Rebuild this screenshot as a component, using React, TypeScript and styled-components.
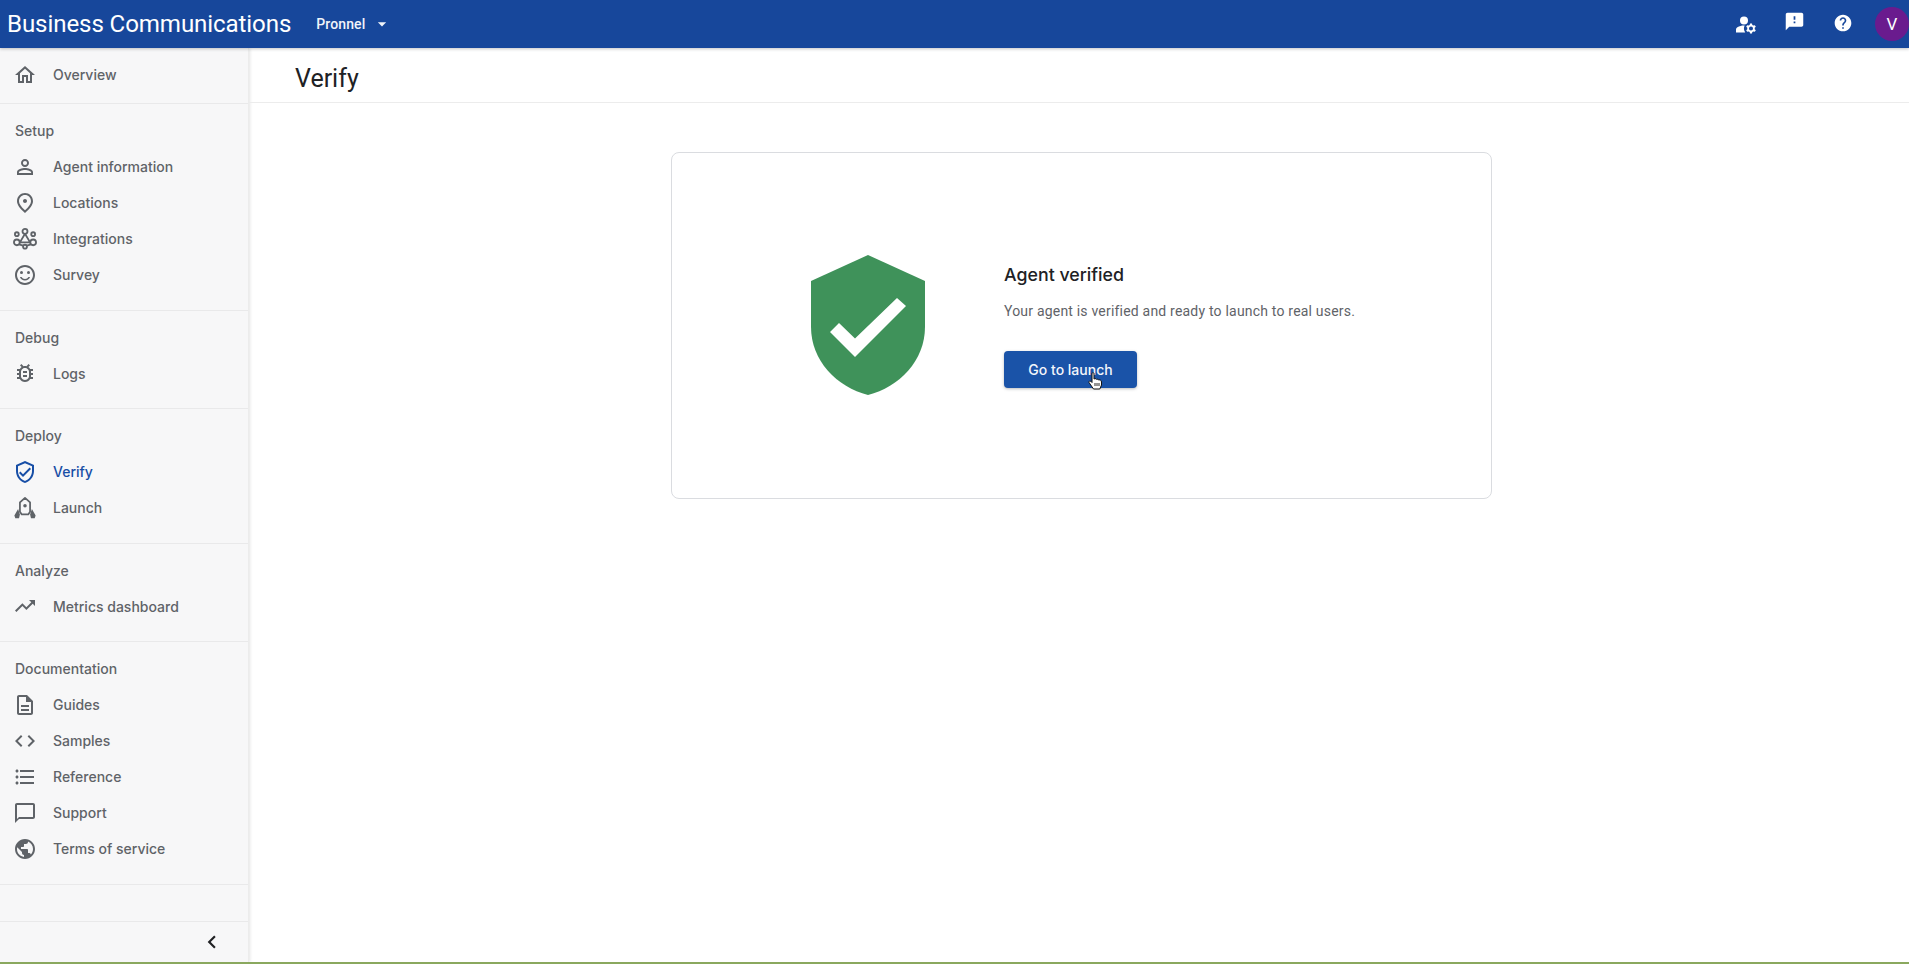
import React from "react";
import styled, { createGlobalStyle } from "styled-components";
import {
  MdOutlineHome,
  MdPersonOutline,
  MdOutlinePlace,
  MdOutlineSentimentSatisfied,
  MdOutlineBugReport,
  MdOutlineVerifiedUser,
  MdTrendingUp,
  MdOutlineDescription,
  MdCode,
  MdFormatListBulleted,
  MdChatBubbleOutline,
  MdPublic,
  MdChevronLeft,
  MdArrowDropDown,
  MdFeedback,
  MdHelp,
  MdManageAccounts,
} from "react-icons/md";

const Global = createGlobalStyle`
  html, body { margin: 0; padding: 0; height: 100%; background: #fff; }
  body { font-family: Roboto, "Liberation Sans", sans-serif; overflow: hidden; }
  #root { height: 100%; }
`;

const Page = styled.div`
  display: flex;
  flex-direction: column;
  height: 964px;
  border-bottom: 2px solid #8aa85e;
  box-sizing: border-box;
  overflow: hidden;
`;

const TopBar = styled.header`
  display: flex;
  align-items: center;
  flex: none;
  height: 48px;
  padding-left: 7px;
  background: #17479b;
  color: #fff;
  box-shadow: 0 1px 3px rgba(60, 64, 67, 0.3);
  position: relative;
  z-index: 2;
`;

const Product = styled.div`
  font-size: 24.1px;
  font-weight: 400;
  letter-spacing: -0.1px;
  margin-right: 25px;
`;

const Project = styled.div`
  display: flex;
  align-items: center;
  font-size: 14px;
  font-weight: 500;
  letter-spacing: 0.1px;
  color: #f1f4fa;
`;

const Caret = styled.span`
  display: flex;
  margin-left: 7px;
  font-size: 20px;
`;

const TopActions = styled.div`
  display: flex;
  align-items: center;
  gap: 24.6px;
  margin-left: auto;
  margin-right: 0;
`;

const ActionIcon = styled.span<{ $size: number; $up?: number }>`
  display: flex;
  align-items: center;
  justify-content: center;
  width: 24px;
  color: #fff;
  font-size: ${(p) => p.$size}px;
  margin-top: ${(p) => (p.$up ? `-${p.$up}px` : "0")};
`;

const Avatar = styled.div`
  display: flex;
  align-items: center;
  justify-content: center;
  width: 34px;
  height: 34px;
  margin-left: -5px;
  border-radius: 50%;
  background: #6a1b8e;
  font-size: 17px;
`;

const Body = styled.div`
  display: flex;
  flex: 1;
  min-height: 0;
`;

const Sidebar = styled.aside`
  display: flex;
  flex-direction: column;
  flex: none;
  width: 248px;
  background: #f7f7f8;
  border-right: 1px solid #ececec;
  box-shadow: 1px 0 3px rgba(60, 64, 67, 0.14);
`;

const OverviewBlock = styled.div`
  height: 54px;
  display: flex;
  align-items: center;
  border-bottom: 1px solid #e9e9ea;
  padding-bottom: 1px;
`;

const Section = styled.section`
  padding: 17px 0 16.5px;
  border-bottom: 1px solid #e9e9ea;
`;

const SectionLabel = styled.div`
  height: 20px;
  line-height: 20px;
  padding-left: 15px;
  margin-bottom: 8px;
  font-family: Inter, Roboto, sans-serif;
  font-size: 14px;
  font-weight: 500;
  color: #5f6368;
`;

const NavRow = styled.div<{ $active?: boolean }>`
  display: flex;
  align-items: center;
  gap: 16px;
  width: 100%;
  height: 36px;
  padding-left: 13px;
  padding-bottom: 1px;
  box-sizing: border-box;
  font-family: Inter, Roboto, sans-serif;
  font-size: 14px;
  font-weight: 500;
  color: ${(p) => (p.$active ? "#174ea6" : "#5f6368")};
`;

const NavIcon = styled.span`
  display: flex;
  align-items: center;
  justify-content: center;
  width: 24px;
  height: 24px;
  flex: none;
  font-size: 24px;
`;

const Spacer = styled.div`
  flex: none;
  height: 36px;
  border-bottom: 1px solid #e9e9ea;
`;

const SideFooter = styled.div`
  flex: 1;
  display: flex;
  align-items: center;
  justify-content: flex-end;
  padding-right: 23px;
  font-size: 26px;
  color: #202124;
`;

const Main = styled.main`
  flex: 1;
  min-width: 0;
  display: flex;
  flex-direction: column;
`;

const PageHeader = styled.div`
  display: flex;
  align-items: center;
  flex: none;
  height: 48px;
  padding: 6px 0 0 46px;
  border-bottom: 1px solid #ececec;
  font-size: 25px;
  color: #202124;
`;

const CardArea = styled.div`
  display: flex;
  justify-content: center;
  padding: 49px 0 0 5px;
`;

const Card = styled.div`
  display: flex;
  align-items: flex-start;
  width: 821px;
  height: 347px;
  box-sizing: border-box;
  padding: 102px 0 0 139px;
  border: 1px solid #dadce0;
  border-radius: 8px;
`;

const ShieldArt = styled.svg`
  flex: none;
  width: 114px;
  height: 140px;
`;

const CardText = styled.div`
  display: flex;
  flex-direction: column;
  align-items: flex-start;
  margin: 8px 0 0 79px;
`;

const CardTitle = styled.h2`
  margin: 0;
  font-family: Inter, Roboto, sans-serif;
  font-size: 17.8px;
  line-height: 24px;
  font-weight: 500;
  color: #202124;
`;

const CardBody = styled.p`
  margin: 14px 0 0;
  font-size: 14px;
  line-height: 20px;
  letter-spacing: 0.2px;
  color: #5f6368;
`;

const LaunchButton = styled.div`
  position: relative;
  display: flex;
  align-items: center;
  justify-content: center;
  width: 133px;
  height: 37px;
  margin-top: 30px;
  border-radius: 4px;
  background: #1a53a8;
  color: #f3f6fb;
  font-family: Inter, Roboto, sans-serif;
  font-size: 14px;
  font-weight: 500;
  box-shadow: 0 1px 3px rgba(60, 64, 67, 0.35);
`;

const Pointer = styled.svg`
  position: absolute;
  left: 84px;
  top: 21px;
  width: 15px;
  height: 18px;
`;

const IntegrationsIcon = () => (
  <svg width="25" height="24" viewBox="0 0 25 24" fill="none" stroke="currentColor" strokeWidth="1.9">
    <circle cx="12.5" cy="4" r="2.6" />
    <circle cx="4" cy="7" r="2" />
    <circle cx="21" cy="7" r="2" />
    <circle cx="4" cy="15.5" r="3" />
    <circle cx="21" cy="15.5" r="3" />
    <circle cx="12.5" cy="20" r="2" />
    <path d="M12.5 6.6 L7.5 15 M12.5 6.6 L17.5 15 M7 15.5 H18 M6.3 17.5 L10.5 19 M18.7 17.5 L14.5 19" />
  </svg>
);

const RocketIcon = () => (
  <svg width="26" height="26" viewBox="0 0 26 26" fill="none" stroke="currentColor" strokeWidth="1.9">
    <path d="M13 2 L18.5 7 V17 L16.5 20 H9.5 L7.5 17 V7 Z" strokeLinejoin="round" />
    <circle cx="13" cy="10.5" r="1.9" fill="currentColor" stroke="none" />
    <path d="M5.5 14 L1.5 21 L2.5 24 H6.5 L7.5 20 Z M20.5 14 L24.5 21 L23.5 24 H19.5 L18.5 20 Z" fill="currentColor" stroke="none" />
  </svg>
);

type Item = { label: string; icon: React.ReactNode; active?: boolean };

const sections: { title: string; items: Item[] }[] = [
  {
    title: "Setup",
    items: [
      { label: "Agent information", icon: <MdPersonOutline /> },
      { label: "Locations", icon: <MdOutlinePlace /> },
      { label: "Integrations", icon: <IntegrationsIcon /> },
      { label: "Survey", icon: <MdOutlineSentimentSatisfied /> },
    ],
  },
  { title: "Debug", items: [{ label: "Logs", icon: <MdOutlineBugReport /> }] },
  {
    title: "Deploy",
    items: [
      { label: "Verify", icon: <MdOutlineVerifiedUser />, active: true },
      { label: "Launch", icon: <RocketIcon /> },
    ],
  },
  { title: "Analyze", items: [{ label: "Metrics dashboard", icon: <MdTrendingUp /> }] },
  {
    title: "Documentation",
    items: [
      { label: "Guides", icon: <MdOutlineDescription /> },
      { label: "Samples", icon: <MdCode /> },
      { label: "Reference", icon: <MdFormatListBulleted /> },
      { label: "Support", icon: <MdChatBubbleOutline /> },
      { label: "Terms of service", icon: <MdPublic /> },
    ],
  },
];

export default function App() {
  return (
    <Page>
      <Global />
      <TopBar>
        <Product>Business Communications</Product>
        <Project>
          Pronnel
          <Caret>
            <MdArrowDropDown />
          </Caret>
        </Project>
        <TopActions>
          <ActionIcon $size={25}>
            <MdManageAccounts />
          </ActionIcon>
          <ActionIcon $size={21} $up={5}>
            <MdFeedback />
          </ActionIcon>
          <ActionIcon $size={20} $up={3}>
            <MdHelp />
          </ActionIcon>
          <Avatar>V</Avatar>
        </TopActions>
      </TopBar>
      <Body>
        <Sidebar>
          <OverviewBlock>
            <NavRow>
              <NavIcon>
                <MdOutlineHome />
              </NavIcon>
              Overview
            </NavRow>
          </OverviewBlock>
          {sections.map((s) => (
            <Section key={s.title}>
              <SectionLabel>{s.title}</SectionLabel>
              {s.items.map((it) => (
                <NavRow key={it.label} $active={it.active}>
                  <NavIcon>{it.icon}</NavIcon>
                  {it.label}
                </NavRow>
              ))}
            </Section>
          ))}
          <Spacer />
          <SideFooter>
            <MdChevronLeft />
          </SideFooter>
        </Sidebar>
        <Main>
          <PageHeader>Verify</PageHeader>
          <CardArea>
            <Card>
              <ShieldArt viewBox="0 0 114 140">
                <path
                  d="M57 0 L114 26 V72 C114 106 88 132 57 140 C26 132 0 106 0 72 V26 Z"
                  fill="#3f925a"
                />
                <path d="M19 77 L44 102 L95 51 L86 43 L44 83.5 L28 68 Z" fill="#fff" />
              </ShieldArt>
              <CardText>
                <CardTitle>Agent verified</CardTitle>
                <CardBody>Your agent is verified and ready to launch to real users.</CardBody>
                <LaunchButton>
                  Go to launch
                  <Pointer viewBox="0 0 15 18">
                    <path
                      d="M4 1.5 C4 .5 6 .5 6 1.5 V7 L7 6.6 C8 6.4 8.4 7 8.6 7.4 C9.6 7 10.3 7.4 10.6 8 C11.6 7.7 13.5 8 13.5 10 V13 L11.8 17 H5.5 L1 10.5 C.5 9.4 2 8.5 3 9.5 L4 10.5 Z"
                      fill="#fff"
                      stroke="#111"
                      strokeWidth="1"
                      strokeLinejoin="round"
                    />
                    <path d="M7 11 V14 M9 11 V14 M11 11 V14" stroke="#111" strokeWidth="0.9" />
                  </Pointer>
                </LaunchButton>
              </CardText>
            </Card>
          </CardArea>
        </Main>
      </Body>
    </Page>
  );
}
